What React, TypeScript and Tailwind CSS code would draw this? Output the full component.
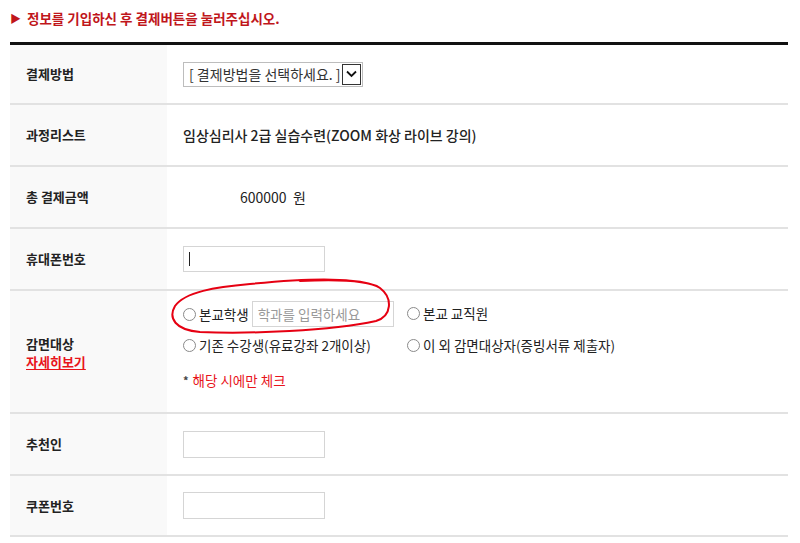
import React from "react";

const font = { fontFamily: '"Noto Sans CJK KR", "Noto Sans", sans-serif' };

function Radio({ label }: { label: string }) {
  return (
    <span className="inline-flex items-center gap-[3px]">
      <span className="inline-block w-[13px] h-[13px] rounded-full border border-[#8a8a8a] bg-white" />
      <span className="text-[13.5px] text-[#222]">{label}</span>
    </span>
  );
}

function Row({
  label,
  children,
  h = "h-[62px]",
}: {
  label: React.ReactNode;
  children?: React.ReactNode;
  h?: string;
}) {
  return (
    <div className={`flex border-b-2 border-[#e2e2e2] ${h}`}>
      <div className="w-[157px] shrink-0 bg-[#f9f9f9] flex items-center pl-[16px] text-[13px] font-bold text-[#222]">
        {label}
      </div>
      <div className="flex-1 flex items-center pl-[16px] text-[14px] text-[#222]">{children}</div>
    </div>
  );
}

export default function App() {
  return (
    <div className="relative w-[800px] h-[543px] bg-white overflow-hidden" style={font}>
      <div className="h-[42px] pl-[10px] pt-[8px] text-[13.5px] font-bold text-[#c0161b] flex items-start">
        <span className="text-[11px] mr-[6px] mt-[2px]">▶</span>
        <span>정보를 기입하신 후 결제버튼을 눌러주십시오.</span>
      </div>
      <div className="ml-[10px] w-[778px] border-t-[3px] border-[#111]">
        <Row label="결제방법" h="h-[60px]">
          <div className="flex items-center h-[25px] border border-[#bdbdbd] bg-white">
            <span className="pl-[5px] pr-[1px] text-[14px] text-[#333] whitespace-nowrap">[ 결제방법을 선택하세요. ]</span>
            <span className="w-[19px] h-[21px] mr-[1px] border border-[#333] flex items-center justify-center">
              <svg width="11" height="8" viewBox="0 0 11 8">
                <path d="M1 1.5 L5.5 6 L10 1.5" stroke="#111" strokeWidth="1.8" fill="none" />
              </svg>
            </span>
          </div>
        </Row>
        <Row label="과정리스트">
          <span className="text-[14px] font-medium text-[#222]">임상심리사 2급 실습수련(ZOOM 화상 라이브 강의)</span>
        </Row>
        <Row label="총 결제금액">
          <span className="pl-[57px] text-[14px] text-[#222] whitespace-pre">600000  원</span>
        </Row>
        <Row label="휴대폰번호">
          <div className="w-[142px] h-[26px] border border-[#d5d5d5] bg-white flex items-center pl-[5px]">
            <span className="w-[1px] h-[14px] bg-[#222]" />
          </div>
        </Row>
        <div className="flex border-b-2 border-[#e2e2e2] h-[123px]">
          <div className="w-[157px] shrink-0 bg-[#f9f9f9] flex flex-col justify-center pl-[16px] pt-[2px] text-[13px] font-bold leading-[18px]">
            <span className="text-[#222]">감면대상</span>
            <span className="text-[#e8141b] underline underline-offset-2">자세히보기</span>
          </div>
          <div className="flex-1 pl-[16px] pt-[10px] flex flex-col">
            <div className="flex items-start">
              <div className="w-[224px] flex items-center gap-[3px]">
                <Radio label="본교학생" />
                <div className="w-[142px] h-[26px] border border-[#d5d5d5] bg-white flex items-center pl-[5px] text-[13.5px] text-[#999]">
                  학과를 입력하세요
                </div>
              </div>
              <div>
                <Radio label="본교 교직원" />
              </div>
            </div>
            <div className="flex items-center mt-[6px]">
              <div className="w-[224px]">
                <Radio label="기존 수강생(유료강좌 2개이상)" />
              </div>
              <Radio label="이 외 감면대상자(증빙서류 제출자)" />
            </div>
            <div className="mt-[13px] flex items-center text-[13.5px]">
              <span className="text-[#444] text-[11px] font-bold mr-[4px]">*</span>
              <span className="text-[#e8141b]">해당 시에만 체크</span>
            </div>
          </div>
        </div>
        <Row label="추천인">
          <div className="w-[142px] h-[27px] border border-[#d5d5d5] bg-white" />
        </Row>
        <Row label="쿠폰번호" h="h-[61px]">
          <div className="w-[142px] h-[27px] border border-[#d5d5d5] bg-white" />
        </Row>
      </div>
      <svg
        className="absolute left-0 top-0 pointer-events-none"
        width="800"
        height="543"
        viewBox="0 0 800 543"
      >
        <path
          d="M300 281 C 340 279, 368 280, 380 288 C 393 298, 392 316, 376 321 C 330 331, 250 334, 200 332 C 175 330, 168 318, 175 306 C 185 292, 215 287, 250 284 C 290 280, 330 278, 352 281"
          stroke="#e60012"
          strokeWidth="2"
          fill="none"
          strokeLinecap="round"
        />
      </svg>
    </div>
  );
}
